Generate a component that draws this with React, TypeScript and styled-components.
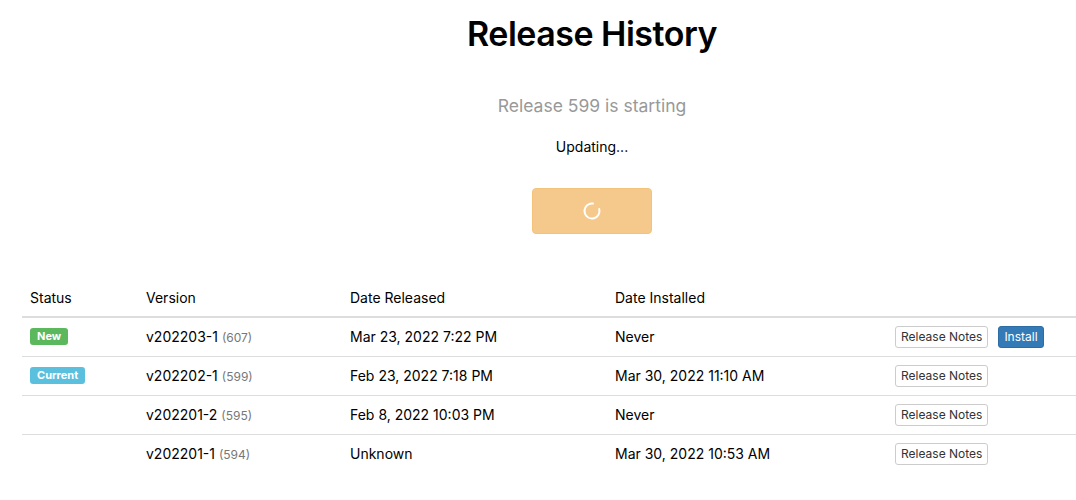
import React from "react";
import styled, { createGlobalStyle } from "styled-components";

const Global = createGlobalStyle`
  html, body { margin: 0; padding: 0; background: #fff; }
  body {
    font-family: Inter, "Helvetica Neue", Helvetica, Arial, sans-serif;
    font-size: 14px;
    line-height: 1.42857;
    color: #000;
    overflow: hidden;
  }
`;

const Viewport = styled.div`
  width: 100%;
  overflow: hidden;
`;

const Page = styled.div`
  width: 1140px;
  margin-left: 22px;
  display: flex;
  flex-direction: column;
  align-items: center;
`;

const Title = styled.h1`
  margin: 14px 0 0;
  font-size: 34px;
  font-weight: 600;
  line-height: 40px;
  letter-spacing: -0.5px;
`;

const Subtitle = styled.p`
  margin: 39px 0 0;
  font-size: 17.5px;
  line-height: 26px;
  color: #999;
`;

const Status = styled.p`
  margin: 18px 0 0;
  font-size: 14px;
  line-height: 20px;
`;

const WaitButton = styled.button`
  margin-top: 31px;
  width: 120px;
  height: 46px;
  border-radius: 4px;
  border: 1px solid #eea236;
  background: #f0ad4e;
  opacity: 0.65;
  display: flex;
  align-items: center;
  justify-content: center;
  padding: 0;
  cursor: not-allowed;
`;

const Table = styled.table`
  margin-top: 45px;
  width: 100%;
  border-collapse: collapse;
  table-layout: fixed;
`;

const Th = styled.th<{ $w?: number }>`
  text-align: left;
  font-weight: 400;
  padding: 9px 8px 8px;
  line-height: 20px;
  border-bottom: 2px solid #ddd;
  width: ${(p) => (p.$w ? `${p.$w}px` : "auto")};
`;

const Td = styled.td`
  padding: 8px;
  height: 22px;
  line-height: 20px;
  vertical-align: middle;
  border-top: 1px solid #ddd;
  white-space: nowrap;
`;

const Row = styled.tr`
  &:first-child td { border-top: 0; }
`;

const Badge = styled.span<{ $color: string }>`
  display: inline-block;
  background: ${(p) => p.$color};
  color: #fff;
  font-size: 11px;
  font-weight: 700;
  line-height: 1;
  padding: 3px 7px 3px;
  border-radius: 3px;
  vertical-align: 2px;
`;

const Build = styled.small`
  font-size: 12px;
  line-height: 1;
  color: #777;
`;

const Actions = styled.div`
  display: flex;
  gap: 10px;
  align-items: center;
  height: 22px;
`;

const SmallButton = styled.button<{ $primary?: boolean }>`
  font-family: inherit;
  font-size: 12px;
  line-height: 18px;
  padding: 1px 5px;
  border-radius: 3px;
  border: 1px solid ${(p) => (p.$primary ? "#2e6da4" : "#ccc")};
  background: ${(p) => (p.$primary ? "#337ab7" : "#fff")};
  color: ${(p) => (p.$primary ? "#fff" : "#333")};
  cursor: pointer;
`;

const Spinner = () => (
  <svg width="22" height="22" viewBox="0 0 22 22">
    <circle
      cx="11"
      cy="11"
      r="7.5"
      fill="none"
      stroke="#fff"
      strokeWidth="2"
      strokeLinecap="round"
      strokeDasharray="38 47.1"
      transform="rotate(-15 11 11)"
    />
  </svg>
);

type Release = {
  status?: "new" | "current";
  version: string;
  build: number;
  released: string;
  installed: string;
  installable?: boolean;
};

const releases: Release[] = [
  { status: "new", version: "v202203-1", build: 607, released: "Mar 23, 2022 7:22 PM", installed: "Never", installable: true },
  { status: "current", version: "v202202-1", build: 599, released: "Feb 23, 2022 7:18 PM", installed: "Mar 30, 2022 11:10 AM" },
  { version: "v202201-2", build: 595, released: "Feb 8, 2022 10:03 PM", installed: "Never" },
  { version: "v202201-1", build: 594, released: "Unknown", installed: "Mar 30, 2022 10:53 AM" },
];

export default function App() {
  return (
    <Viewport>
      <Global />
      <Page>
        <Title>Release History</Title>
        <Subtitle>Release 599 is starting</Subtitle>
        <Status>Updating...</Status>
        <WaitButton disabled>
          <Spinner />
        </WaitButton>
        <Table>
          <thead>
            <tr>
              <Th $w={100}>Status</Th>
              <Th $w={188}>Version</Th>
              <Th $w={249}>Date Released</Th>
              <Th $w={264}>Date Installed</Th>
              <Th />
            </tr>
          </thead>
          <tbody>
            {releases.map((r) => (
              <Row key={r.version}>
                <Td>
                  {r.status === "new" && <Badge $color="#5cb85c">New</Badge>}
                  {r.status === "current" && <Badge $color="#5bc0de">Current</Badge>}
                </Td>
                <Td>
                  {r.version} <Build>({r.build})</Build>
                </Td>
                <Td>{r.released}</Td>
                <Td>{r.installed}</Td>
                <Td>
                  <Actions>
                    <SmallButton>Release Notes</SmallButton>
                    {r.installable && <SmallButton $primary>Install</SmallButton>}
                  </Actions>
                </Td>
              </Row>
            ))}
          </tbody>
        </Table>
      </Page>
    </Viewport>
  );
}
